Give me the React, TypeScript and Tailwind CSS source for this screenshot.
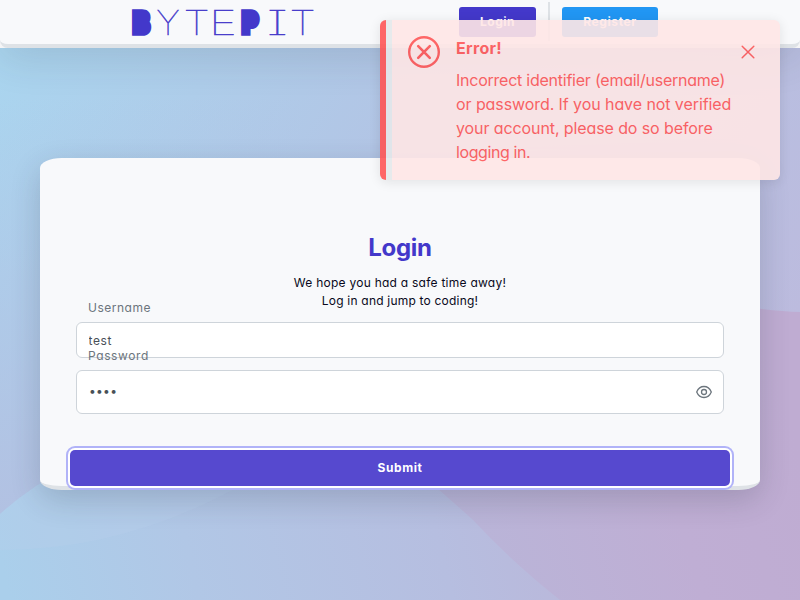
import React from "react";

const LETTERS = [
  { ch: "B", box: "w-[24px]", cls: "text-[28px] font-black scale-x-[0.86] [-webkit-text-stroke:5.6px_#4338ca]" },
  { ch: "Y", box: "w-[30px]", cls: "font-thin scale-x-[1.08] [-webkit-text-stroke:0.4px_#4338ca]" },
  { ch: "T", box: "w-[26px]", cls: "font-thin scale-x-[1.25] [-webkit-text-stroke:0.4px_#4338ca]" },
  { ch: "E", box: "w-[27px]", cls: "font-thin scale-x-[1.4] [-webkit-text-stroke:0.4px_#4338ca]" },
  { ch: "P", box: "w-[29px]", cls: "text-[28px] font-black scale-x-[0.86] [-webkit-text-stroke:5.4px_#4338ca]" },
  { ch: "I", box: "w-[24px]", cls: "font-thin scale-x-[1.7] [-webkit-text-stroke:0.4px_#4338ca] [font-feature-settings:'cv08']" },
  { ch: "T", box: "w-[26px]", cls: "font-thin scale-x-[1.25] [-webkit-text-stroke:0.4px_#4338ca]" },
];

function Logo() {
  return (
    <div className="flex h-full w-[188px] items-start pt-[3px] text-[34px] leading-[40px] text-[#4338ca]">
      {LETTERS.map((l, i) => (
        <span key={i} className={`flex shrink-0 justify-center ${l.box}`}>
          <span className={`inline-block leading-[40px] ${l.cls}`}>{l.ch}</span>
        </span>
      ))}
    </div>
  );
}

function Background() {
  return (
    <svg className="absolute inset-0 h-full w-full" viewBox="0 0 800 600" preserveAspectRatio="none">
      <defs>
        <linearGradient id="base" gradientUnits="userSpaceOnUse" x1="0" y1="60" x2="700" y2="480">
          <stop offset="0" stopColor="#aad5ef" />
          <stop offset="0.45" stopColor="#b2c5e5" />
          <stop offset="1" stopColor="#bcbbde" />
        </linearGradient>
        <linearGradient id="side" gradientUnits="userSpaceOnUse" x1="0" y1="100" x2="70" y2="510">
          <stop offset="0" stopColor="#b0c7e7" stopOpacity="0" />
          <stop offset="1" stopColor="#b2c1e2" />
        </linearGradient>
        <linearGradient id="wave" gradientUnits="userSpaceOnUse" x1="0" y1="560" x2="600" y2="420">
          <stop offset="0" stopColor="#aacfeb" />
          <stop offset="0.3" stopColor="#b1c7e6" />
          <stop offset="0.7" stopColor="#b6bee0" />
          <stop offset="1" stopColor="#bcb5d8" />
        </linearGradient>
        <linearGradient id="pink" gradientUnits="userSpaceOnUse" x1="430" y1="560" x2="800" y2="450">
          <stop offset="0" stopColor="#b8b6d9" />
          <stop offset="0.65" stopColor="#bfaed4" />
          <stop offset="1" stopColor="#bfacd2" />
        </linearGradient>
      </defs>
      <rect width="800" height="600" fill="url(#base)" />
      <rect y="100" width="300" height="420" fill="url(#side)" />
      <path d="M0 514 Q60 460 160 430 L400 440 L620 600 L0 600Z" fill="url(#wave)" />
      <path d="M0 514 Q60 460 160 430 L250 480 Q130 550 0 550Z" fill="#b6cdec" fillOpacity="0.35" />
      <path d="M380 440 L600 280 Q740 310 800 312 L800 600 L560 600 Q510 560 473 520 Q440 490 380 440Z" fill="url(#pink)" />
    </svg>
  );
}

function Toast() {
  return (
    <div className="absolute left-[380px] top-[20px] z-20 w-[400px] overflow-hidden rounded-md border-l-[6px] border-[#ff5757] bg-[#ffe7e6] text-[#ff5757] opacity-90 shadow-[0_2px_12px_0_rgba(0,0,0,0.1)]">
      <div className="flex h-[160px] items-start border-l-[6px] border-[#e6e9eb] p-4">
        <svg className="h-8 w-8 shrink-0" viewBox="0 0 32 32" fill="none" stroke="currentColor" strokeLinecap="round">
          <circle cx="16" cy="16" r="14.8" strokeWidth="2.4" />
          <path d="M10.2 10.2 21.8 21.8M21.8 10.2 10.2 21.8" strokeWidth="2.6" />
        </svg>
        <div className="ml-4 w-[276px] text-base leading-6">
          <div className="font-bold tracking-[0.3px]">Error!</div>
          <div className="mt-2 whitespace-nowrap">
            <span className="tracking-[-0.24px]">Incorrect identifier (email/username)</span>
            <br />
            <span className="tracking-[-0.08px]">or password. If you have not verified</span>
            <br />
            <span className="tracking-[-0.1px]">your account, please do so before</span>
            <br />
            <span className="tracking-[-0.4px]">logging in.</span>
          </div>
        </div>
        <button className="flex h-8 w-8 shrink-0 items-center justify-center" aria-label="Close">
          <svg className="h-[14px] w-[14px]" viewBox="0 0 14 14" fill="none" stroke="currentColor" strokeWidth="1.5" strokeLinecap="round">
            <path d="M1.2 1.2 12.8 12.8M12.8 1.2 1.2 12.8" />
          </svg>
        </button>
      </div>
    </div>
  );
}

export default function App() {
  return (
    <div className="relative flex h-[600px] w-[800px] flex-col overflow-hidden bg-white font-[Inter,sans-serif] text-[12px] text-[#090920] [font-feature-settings:'cv02','cv03','cv04','cv11']">
      <div className="absolute inset-x-0 bottom-0 top-[48px] overflow-hidden">
        <div className="absolute inset-x-0 -top-[48px] h-[600px]">
          <Background />
        </div>
      </div>

      <header className="relative z-10 flex h-12 shrink-0 rounded-b-[8px] border-b-4 border-[#dee2e6] bg-[#f8f9fb] pl-[129px] shadow-[0_10px_40px_rgba(41,50,65,0.14)]">
        <Logo />
        <div className="ml-[142px] flex items-start">
          <button className="mt-[7px] h-[30px] w-[77px] rounded-[3px] bg-[#4338ca] font-bold tracking-[0.5px] text-white">Login</button>
          <div className="ml-3 mt-[2px] h-[39px] w-[2px] bg-[#dee2e6]" />
          <button className="ml-3 mt-[7px] h-[30px] w-[96px] rounded-[3px] bg-[#2196f3] font-bold tracking-[0.6px] text-white">Register</button>
        </div>
      </header>

      <main className="relative mx-10 mt-[110px] flex h-[332px] flex-col rounded-[3%] border-b-4 border-[#dee2e6] bg-[#f8f9fb] px-9 pt-[72px] shadow-[0_10px_30px_rgba(41,50,65,0.2)]">
        <h1 className="text-center text-[24px] font-bold leading-9 tracking-[-0.3px] text-[#4338ca]">Login</h1>
        <p className="mt-[8px] text-center leading-[18px] tracking-[0.25px]">
          We hope you had a safe time away!
          <br />
          <span className="tracking-[0.2px]">Log in and jump to coding!</span>
        </p>
        <div className="relative mt-3 h-9">
          <input className="block h-9 w-full rounded-md border border-[#ced4da] bg-white px-[11.5px] tracking-[0.6px] text-[#495057] outline-none" defaultValue="test" />
          <label className="absolute -top-[23px] left-3 leading-[18px] tracking-[0.5px] text-[#6c757d]">Username</label>
        </div>
        <div className="relative mt-3 h-11">
          <input type="password" className="block h-11 w-full rounded-md border border-[#ced4da] bg-white px-[12px] pb-[3px] tracking-[0.3px] text-[#495057] outline-none" defaultValue="test" />
          <label className="absolute -top-[23px] left-3 leading-[18px] tracking-[0.6px] text-[#6c757d]">Password</label>
          <svg className="absolute right-3 top-[14px] h-4 w-4 text-[#6c757d]" viewBox="0 0 16 16" fill="none" stroke="currentColor" strokeWidth="1.3">
            <path d="M.7 8C2.2 4.4 4.8 2.5 8 2.5S13.8 4.4 15.3 8C13.8 11.6 11.2 13.5 8 13.5S2.2 11.6.7 8Z" />
            <circle cx="8" cy="8" r="2.5" />
          </svg>
        </div>
        <button className="-mx-[6px] mt-9 h-9 shrink-0 rounded-[5px] bg-[#5649cf] font-bold tracking-[0.6px] text-white shadow-[0_0_0_2px_#ffffff,0_0_0_4px_#b1b3f8]">Submit</button>
      </main>

      <Toast />
    </div>
  );
}
